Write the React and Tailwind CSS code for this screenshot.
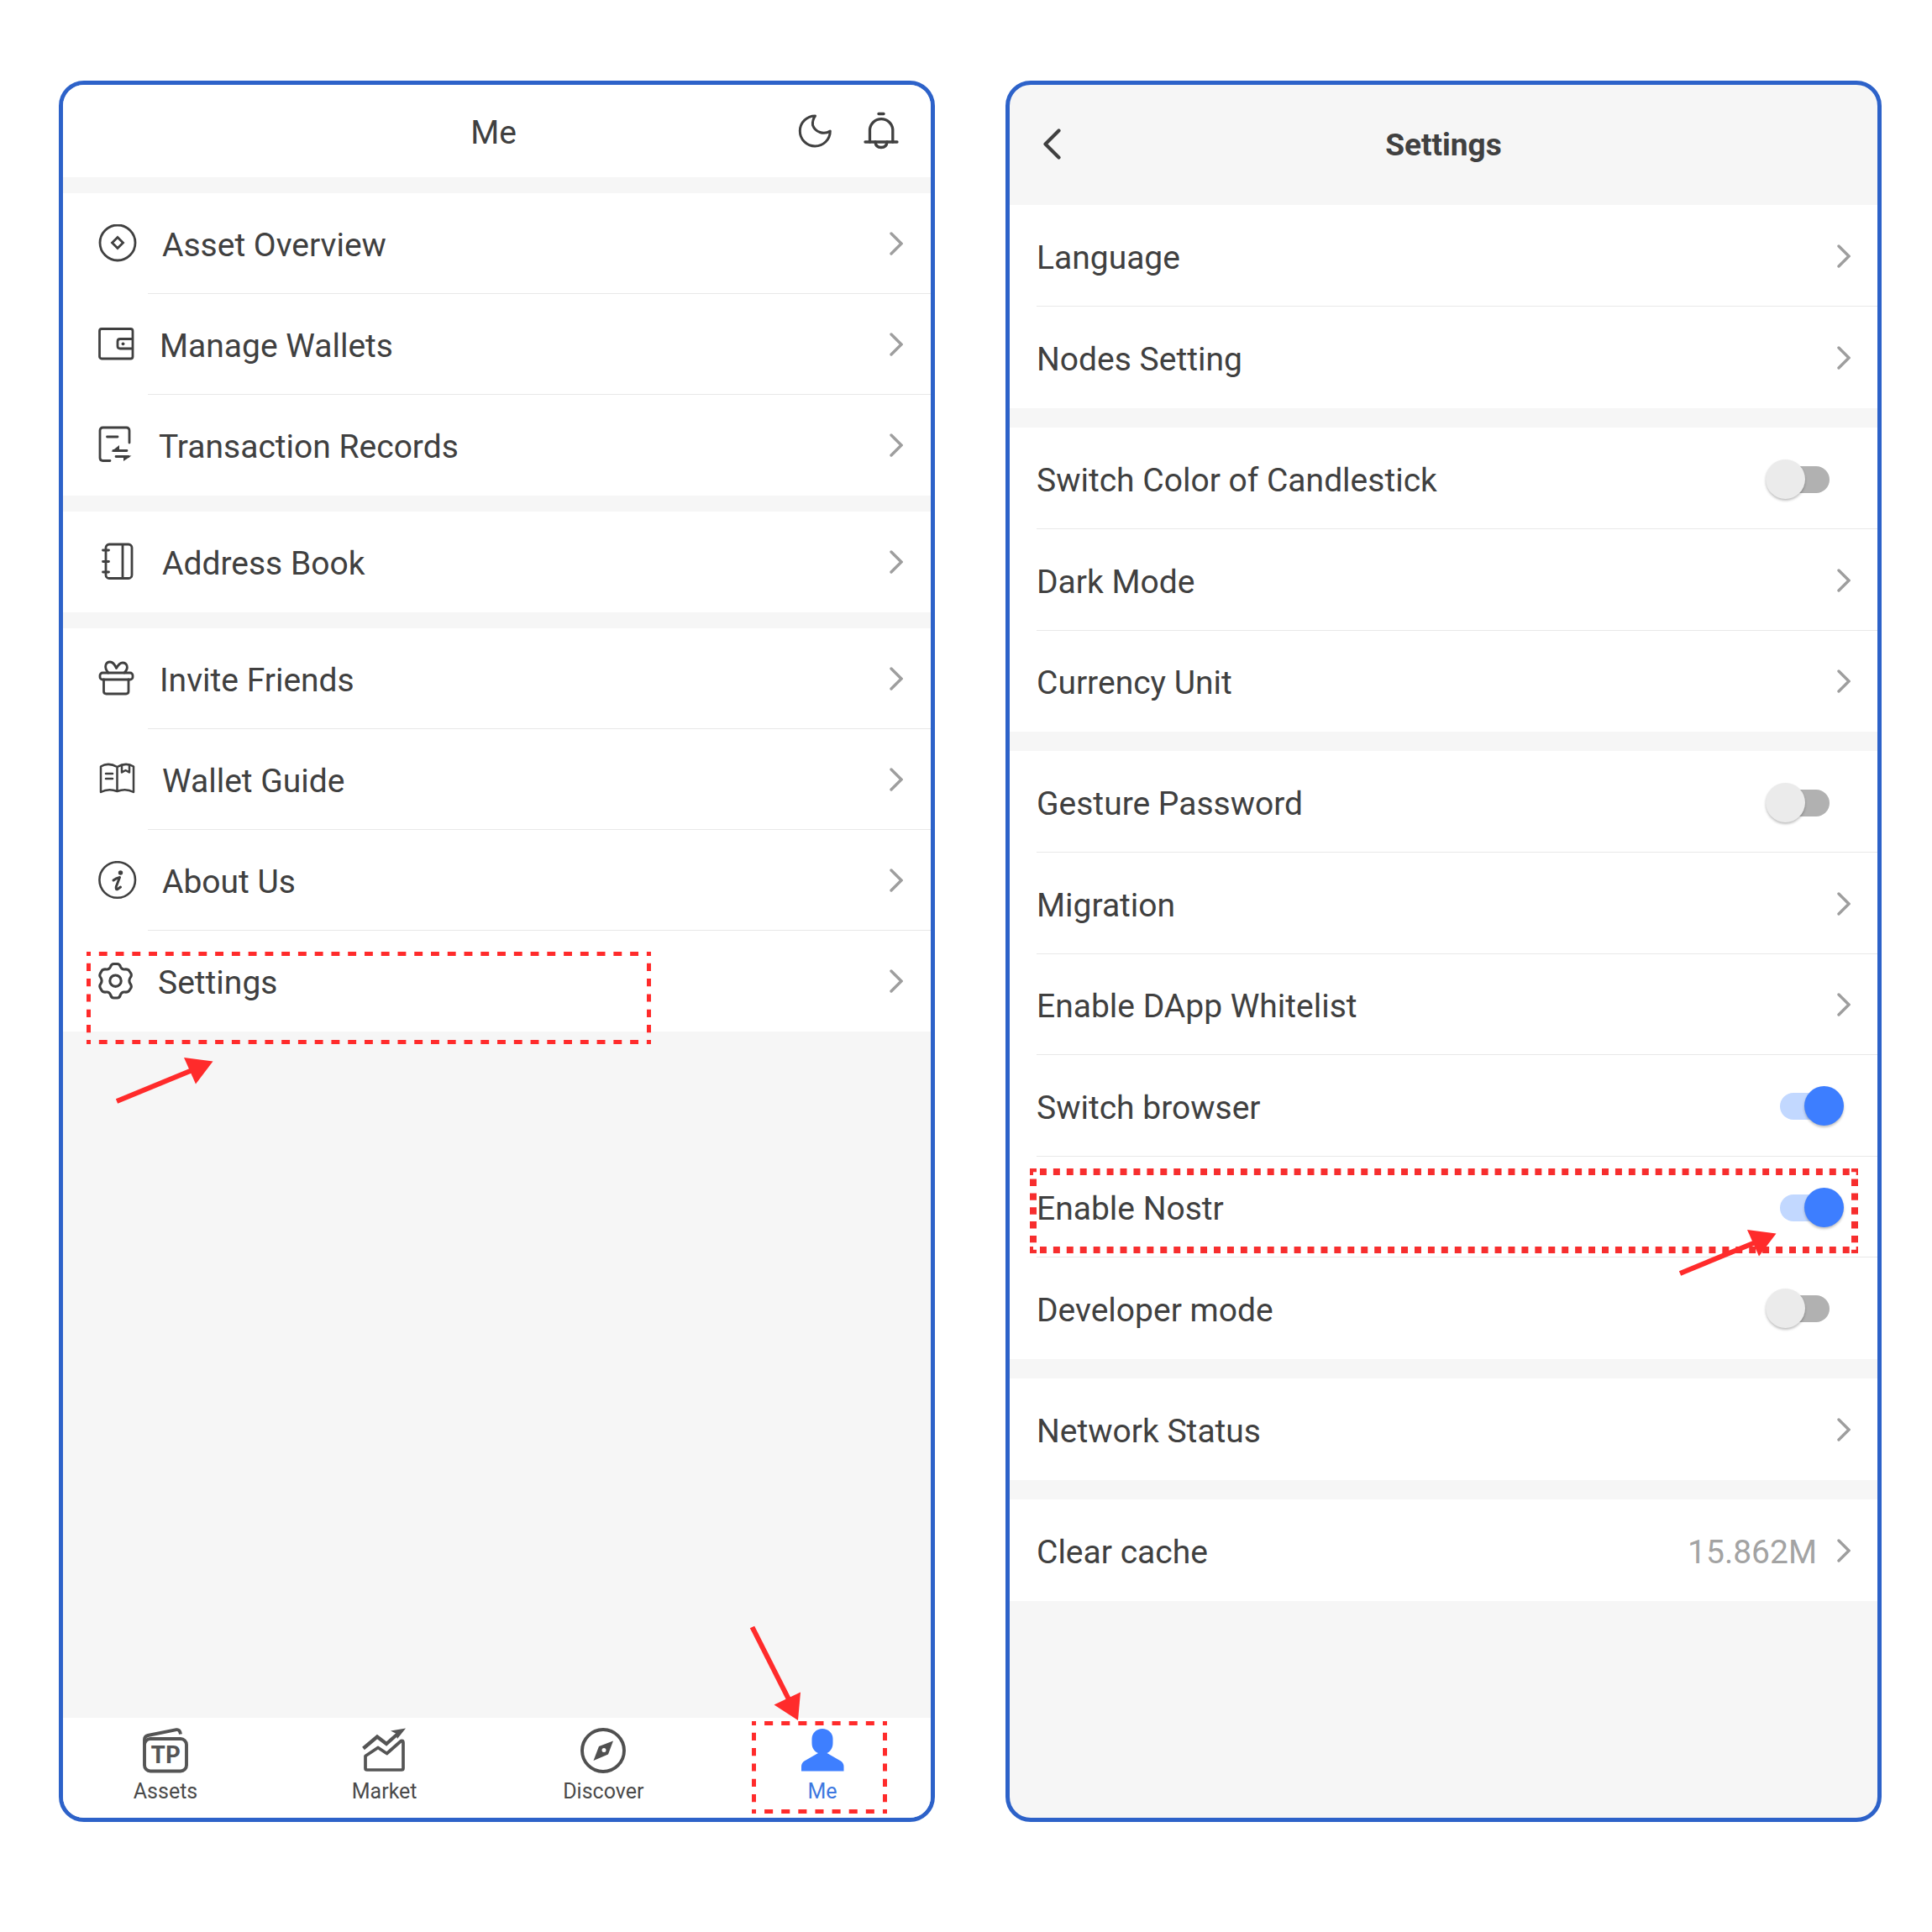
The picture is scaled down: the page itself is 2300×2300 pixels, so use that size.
const INK = "#404040";

function Chevron() {
  return (
    <svg width="16" height="28" viewBox="0 0 16 28" fill="none" stroke="#9e9e9e" strokeWidth="3.400" strokeLinecap="round" aria-hidden="true" className="shrink-0">
      <path d="M2 2 L14 14 L2 26" />
    </svg>
  );
}

function Icon({ width, children, stroke = 2.8 }) {
  return (
    <svg width={width} height="46" viewBox={`0 0 ${width} 46`} fill="none" stroke={INK} strokeWidth={stroke} strokeLinecap="round" strokeLinejoin="round" aria-hidden="true" className="shrink-0">
      {children}
    </svg>
  );
}

const OverviewIcon = () => (
  <Icon width={46}>
    <circle cx="23" cy="22" r="21" />
    <path d="M23 15.500 L29.500 22 L23 28.500 L16.500 22 Z" strokeLinejoin="miter" />
  </Icon>
);

const WalletIcon = () => (
  <Icon width={43}>
    <rect x="1.5" y="4.5" width="39.500" height="35.500" rx="2.5" />
    <path d="M40 16.500 H26 Q23 16.500 23 19.500 V25 Q23 28 26 28 H40" />
    <circle cx="29.5" cy="22.300" r="1.900" fill={INK} stroke="none" />
  </Icon>
);

const RecordsIcon = () => (
  <Icon width={42}>
    <path d="M37 20 V5.500 Q37 2 33.500 2 H5.500 Q2 2 2 5.500 V38 Q2 41.500 5.500 41.500 H14" />
    <path d="M10.500 13 H23" />
    <path d="M34 29.500 H18 M21 36.500 H36" />
    <path d="M15.500 30.500 L25 23 V30.500 Z" fill={INK} stroke="none" />
    <path d="M39.500 35.500 L30 42 V35.500 Z" fill={INK} stroke="none" />
  </Icon>
);

const AddressIcon = () => (
  <Icon width={46}>
    <rect x="9" y="2" width="31" height="40.500" rx="4" />
    <path d="M29 3 V42 M5.500 9 H12.500 M5.500 22.500 H12.500 M5.500 35 H12.500" />
  </Icon>
);

const GiftIcon = () => (
  <Icon width={43}>
    <rect x="2" y="16" width="39" height="8" rx="3" />
    <path d="M6.500 24 V38 Q6.500 41 9.500 41 H33 Q36 41 36 38 V24" />
    <path d="M12 16 C6 9 9 3 14 3 C18 3 20 7 21.500 10.500 C24 6 26 4 29 4 C34 4 37 10 31 16" />
  </Icon>
);

const GuideIcon = () => (
  <Icon width={46} stroke={2.5}>
    <path d="M22.500 8 Q12 2 3 7.500 V38 Q12 33 22.500 37 Q33 33 42 38 V7.500 Q33 2 22.500 8 Z M22.500 8 V36" />
    <path d="M9 16 H17 M9 22 H17" />
    <path d="M28 6.500 V14.500 L32.500 12 L37 14.500 V6.500" />
  </Icon>
);

const InfoIcon = () => (
  <Icon width={46} stroke={2.600}>
    <circle cx="22.700" cy="22.500" r="21.300" />
    <path d="M18 23 Q21 20.500 25.500 19.500 L21.300 30.500 Q20.500 34.500 23 33.500 L26.500 31" strokeWidth="3" />
    <circle cx="26.500" cy="14" r="2.700" fill={INK} stroke="none" />
  </Icon>
);

const GearIcon = () => (
  <Icon width={41} stroke={3.1}>
    <path d="M14.500 6 Q15.500 2.500 18.500 2.500 H22.500 Q25.500 2.500 26.500 6 Q28 9.500 31.500 9 Q35.500 8.500 37 11 L39 14 Q40 17 38 19 Q35.800 22.500 38 26 Q40 28.500 39 31 L37 34 Q35.500 36.500 31.500 36 Q28 35.500 26.500 39 Q25.500 43 22.500 43 H18.500 Q15.500 43 14.500 39 Q13 35.500 9.500 36 Q5.500 36.500 4 34 L2.300 31 Q1 28.500 3 26 Q5.200 22.500 3 19 Q1 17 2.300 14 L4 11 Q5.500 8.500 9.500 9 Q13 9.500 14.500 6 Z" />
    <circle cx="20.500" cy="22.700" r="6.700" />
  </Icon>
);

const MoonIcon = () => (
  <svg width="40" height="40" viewBox="0 0 40 40" fill="none" stroke={INK} strokeWidth="3" strokeLinejoin="round" strokeLinecap="round" aria-hidden="true">
    <path d="M20.500 2 A18 18 0 1 0 38.300 20 A14 14 0 0 1 17.500 13 Q17 6.500 20.500 2 Z" />
  </svg>
);

const BellIcon = () => (
  <svg width="42" height="46" viewBox="0 0 42 46" fill="none" stroke={INK} strokeWidth="3.300" strokeLinecap="round" strokeLinejoin="round" aria-hidden="true">
    <path d="M18 2.500 H24" />
    <path d="M7.500 36 V21 A13.700 13.500 0 0 1 34.800 21 V36" />
    <path d="M2 36 H40" />
    <path d="M14 36 Q14.500 42.500 21 42.500 Q27.500 42.500 28 36" />
  </svg>
);

const AssetsIcon = () => (
  <svg width="54" height="54" viewBox="0 0 54 54" fill="none" stroke="#555555" strokeWidth="3.900" strokeLinejoin="round" aria-hidden="true">
    <rect x="2" y="13" width="50" height="38.500" rx="7" />
    <path d="M2 20 V14 Q2 10 6 9 L40 2.200 Q44 1.500 45 7.500" />
    <text x="27" y="42" textAnchor="middle" fill="#555555" stroke="none" fontFamily="Lato, sans-serif" fontWeight="900" fontSize="28">TP</text>
  </svg>
);

const MarketIcon = () => (
  <svg width="54" height="54" viewBox="0 0 54 54" fill="none" stroke="#555555" strokeWidth="3.700" strokeLinejoin="round" aria-hidden="true">
    <path d="M4 33.500 L19 23.500 L29.500 30.500 L46.500 15.500 Q49 14.500 49 17.500 V48 Q49 50 47 50 H6 Q4 50 4 48 Z" />
    <path d="M1.500 24.500 L18 10.500 L29 19 L42 7.500" strokeWidth="4.300" strokeLinejoin="miter" />
    <path d="M52 0.500 L34 3.500 L40 6.500 L42 13 Z" fill="#555555" stroke="none" />
  </svg>
);

const DiscoverIcon = () => (
  <svg width="54" height="54" viewBox="0 0 54 54" fill="none" aria-hidden="true">
    <circle cx="27" cy="27" r="25" stroke="#505050" strokeWidth="3.900" />
    <path fillRule="evenodd" fill="#505050" d="M39 15.500 L33 31.500 L15.500 39 L22 22 Z M28 24 A2.500 2.500 0 1 0 28 29 A2.500 2.500 0 1 0 28 24 Z" />
  </svg>
);

const PersonIcon = () => (
  <svg width="54" height="54" viewBox="0 0 54 54" fill="#3e7fff" aria-hidden="true">
    <path d="M27 1 C34 1 39.500 6 39.500 13 V18 C39.500 24 36.500 28 32.500 30 L49 39.500 Q52.500 42 52.500 46 V51.500 H2 V46 Q2 42 5.500 39.500 L22 30 C17.500 28 14.500 24 14.500 18 V13 C14.500 6 20 1 27 1 Z" />
  </svg>
);

/* Dashed highlight frame; periodX / periodY set the dash rhythm of each side. */
function Highlight({ className, thickness, periodX, periodY, color = "#ff2b2b" }) {
  const x = { strokeDasharray: periodX / 2, strokeDashoffset: periodX / 4 };
  const y = { strokeDasharray: periodY / 2, strokeDashoffset: periodY / 4 };
  return (
    <div className={className} aria-hidden="true">
      <svg width="100%" height="100%" className="block overflow-hidden" stroke={color} strokeWidth={thickness * 2}>
        <line x1="0" y1="0" x2="100%" y2="0" {...x} />
        <line x1="0" y1="100%" x2="100%" y2="100%" {...x} />
        <line x1="0" y1="0" x2="0" y2="100%" {...y} />
        <line x1="100%" y1="0" x2="100%" y2="100%" {...y} />
      </svg>
    </div>
  );
}

function ArrowRight({ className }) {
  return (
    <svg width="120" height="60" viewBox="0 0 120 60" className={className} aria-hidden="true">
      <path d="M3 55 L94 17.500" stroke="#ff2b2b" strokeWidth="6" />
      <path d="M117.500 7.500 L83 3 L97 34.500 Z" fill="#ff2b2b" />
    </svg>
  );
}

function ArrowDown({ className }) {
  return (
    <svg width="64" height="116" viewBox="0 0 64 116" className={className} aria-hidden="true">
      <path d="M3.500 3 L48 91" stroke="#ff2b2b" strokeWidth="6" />
      <path d="M58 114 L29.500 95.500 L61 80.500 Z" fill="#ff2b2b" />
    </svg>
  );
}

const menuGroups = [
  [
    { label: "Asset Overview", icon: OverviewIcon },
    { label: "Manage Wallets", icon: WalletIcon },
    { label: "Transaction Records", icon: RecordsIcon },
  ],
  [{ label: "Address Book", icon: AddressIcon }],
  [
    { label: "Invite Friends", icon: GiftIcon },
    { label: "Wallet Guide", icon: GuideIcon },
    { label: "About Us", icon: InfoIcon },
    { label: "Settings", icon: GearIcon, marked: true },
  ],
];

function MenuRow({ label, icon: RowIcon, marked, last }) {
  return (
    <li className="relative">
      <a href="#" className="flex h-[120px] items-center gap-[30px] pr-[33px] pl-[42px]">
        <RowIcon />
        <span className="flex-1 pt-1">{label}</span>
        <Chevron />
      </a>
      {!last && <div className="absolute right-0 bottom-0 left-[101px] h-px bg-[#e8e8e8]" />}
      {marked && (
        <>
          <Highlight className="absolute top-[25px] left-7 h-[110px] w-[672px]" thickness={5} periodX={19.76} periodY={18.33} />
          <ArrowRight className="absolute top-[148px] left-[61px]" />
        </>
      )}
    </li>
  );
}

const tabs = [
  { label: "Assets", icon: AssetsIcon },
  { label: "Market", icon: MarketIcon },
  { label: "Discover", icon: DiscoverIcon },
  { label: "Me", icon: PersonIcon, active: true },
];

function MePanel() {
  return (
    <section className="flex flex-col overflow-hidden rounded-[30px] border-5 border-[#2d62c9] bg-[#f6f6f6]">
      <header className="grid h-[110px] grid-cols-[1fr_auto_1fr] items-center bg-white pr-[38px] pl-[30px]">
        <h1 className="col-start-2 pt-1">Me</h1>
        <div className="flex items-center justify-end gap-[38px]">
          <button type="button" aria-label="Night mode"><MoonIcon /></button>
          <button type="button" aria-label="Notifications"><BellIcon /></button>
        </div>
      </header>
      <div className="flex flex-1 flex-col gap-[19px] pt-[19px]">
        {menuGroups.map((group) => (
          <ul key={group[0].label} className="bg-white">
            {group.map((item, i) => (
              <MenuRow key={item.label} {...item} last={i === group.length - 1} />
            ))}
          </ul>
        ))}
      </div>
      <nav className="flex justify-between bg-white pt-3 pr-[75px] pb-4 pl-[68px] text-[25px] leading-[30px]">
        {tabs.map(({ label, icon: TabIcon, active }) => (
          <a key={label} href="#" className={`relative flex w-[108px] flex-col items-center gap-[7px] ${active ? "text-[#3d78e0]" : "text-[#4a4a4a]"}`}>
            <TabIcon />
            <span>{label}</span>
            {active && (
              <>
                <Highlight className="absolute -top-2 -left-[30px] h-[110px] w-[161px]" thickness={5} periodX={20.12} periodY={18.33} />
                <ArrowDown className="absolute -top-[123px] -left-[33px] max-w-none" />
              </>
            )}
          </a>
        ))}
      </nav>
    </section>
  );
}

const settingGroups = [
  [{ label: "Language" }, { label: "Nodes Setting" }],
  [{ label: "Switch Color of Candlestick", toggle: "off" }, { label: "Dark Mode" }, { label: "Currency Unit" }],
  [
    { label: "Gesture Password", toggle: "off" },
    { label: "Migration" },
    { label: "Enable DApp Whitelist" },
    { label: "Switch browser", toggle: "on" },
    { label: "Enable Nostr", toggle: "on", marked: true },
    { label: "Developer mode", toggle: "off" },
  ],
  [{ label: "Network Status" }],
  [{ label: "Clear cache", value: "15.862M" }],
];

function Toggle({ on }) {
  return (
    <input
      type="checkbox"
      role="switch"
      defaultChecked={on}
      className="relative mr-[25px] h-[47px] w-[76px] shrink-0 appearance-none before:absolute before:top-2 before:right-0 before:left-1 before:h-8 before:rounded-full before:bg-[#b1b1b1] before:content-[''] after:absolute after:top-0 after:left-0 after:size-[47px] after:rounded-full after:bg-[#ebebeb] after:shadow-[0_2px_3px_rgba(0,0,0,0.25)] after:content-[''] checked:mr-2 checked:before:right-1 checked:before:left-0 checked:before:bg-[#c2d8ff] checked:after:left-[29px] checked:after:bg-[#3d7eff]"
    />
  );
}

function SettingRow({ label, toggle, value, marked, last }) {
  const rowClass = "flex h-full items-center pr-8 pl-8";
  return (
    <li className="relative h-[120px] even:h-[121px]">
      {toggle ? (
        <label className={rowClass}>
          <span className="flex-1 pt-1">{label}</span>
          <Toggle on={toggle === "on"} />
        </label>
      ) : (
        <a href="#" className={rowClass}>
          <span className="flex-1 pt-1">{label}</span>
          {value && <span className="mr-6 pt-1 text-[#a3a3a3]">{value}</span>}
          <Chevron />
        </a>
      )}
      {!last && <div className="absolute right-0 bottom-0 left-8 h-px bg-[#e8e8e8]" />}
      {marked && (
        <>
          <Highlight className="absolute top-3.5 right-[23px] left-6 h-[101px]" thickness={8} periodX={15.93} periodY={16.83} color="#f72e2e" />
          <ArrowRight className="absolute top-[84px] right-[118px]" />
        </>
      )}
    </li>
  );
}

function SettingsPanel() {
  return (
    <section className="overflow-hidden rounded-[30px] border-5 border-[#2d62c9] bg-[#f6f6f6]">
      <header className="grid h-[143px] grid-cols-[1fr_auto_1fr] items-center px-10">
        <button type="button" aria-label="Back" className="justify-self-start">
          <svg width="22" height="40" viewBox="0 0 22 40" fill="none" stroke={INK} strokeWidth="4.200" strokeLinecap="round" strokeLinejoin="round" aria-hidden="true">
            <path d="M18.500 2.500 L2.500 18.500 L18.500 34.500" />
          </svg>
        </button>
        <h1 className="text-[37px] font-bold">Settings</h1>
      </header>
      <div className="flex flex-col gap-[23px]">
        {settingGroups.map((group) => (
          <ul key={group[0].label} className="bg-white pt-px">
            {group.map((item, i) => (
              <SettingRow key={item.label} {...item} last={i === group.length - 1} />
            ))}
          </ul>
        ))}
      </div>
    </section>
  );
}

export default function App() {
  return (
    <main className="grid min-h-screen grid-cols-2 gap-[84px] bg-white pt-24 pr-[60px] pb-[131px] pl-[70px] font-['Roboto',sans-serif] text-[39px] leading-[46px] text-[#404040]">
      <MePanel />
      <SettingsPanel />
    </main>
  );
}
